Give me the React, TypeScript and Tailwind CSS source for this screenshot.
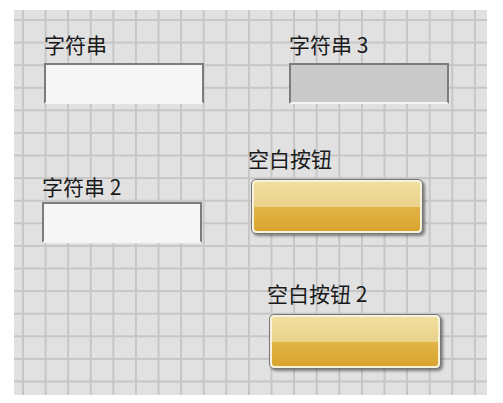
import React from 'react';

const font = { fontFamily: '"Microsoft YaHei", "Noto Sans CJK SC", "Noto Sans", sans-serif' };

// a LabVIEW-style control placed on the free front-panel canvas
function Control({ label, className, children }: { label: string; className: string; children: React.ReactNode }) {
  return (
    <div className={`absolute flex flex-col ${className}`}>
      <span className="text-[21px] leading-none text-[#1a1a1a] whitespace-nowrap" style={font}>
        {label}
      </span>
      {children}
    </div>
  );
}

function StringBox({ disabled }: { disabled?: boolean }) {
  return (
    <div
      className={`h-[41px] w-[160px] border-2 border-[#7c7c7c] border-b-[#f6f6f6] ${
        disabled ? 'bg-[#cacaca]' : 'bg-[#f6f6f6]'
      }`}
    />
  );
}

function BlankButton() {
  return (
    <div className="h-[55px] w-[172px] rounded-[5px] border border-[#777] p-[2px] bg-[#f7f2de] shadow-[2px_2px_3px_rgba(0,0,0,0.45)]">
      <div className="flex h-full w-full flex-col overflow-hidden rounded-[3px]">
        <div className="flex-1 bg-[linear-gradient(to_bottom,#f1df9e,#e9d18a)]" />
        <div className="flex-1 bg-[linear-gradient(to_bottom,#e1b446,#d9a52e)]" />
      </div>
    </div>
  );
}

export default function App() {
  return (
    <div className="h-[403px] w-[503px] bg-white pl-[14px] pt-[10px]">
      {/* front panel canvas */}
      <div className="relative h-[385px] w-[473px] bg-[#e1e1e1] bg-[linear-gradient(to_right,#c6c6c6_2px,transparent_2px),linear-gradient(to_bottom,#c6c6c6_2px,transparent_2px)] bg-[size:22.6px_22.6px] bg-[position:8px_9px]">
        <Control label="字符串" className="left-[30px] top-[24px] gap-[8px]">
          <StringBox />
        </Control>
        <Control label="字符串 3" className="left-[275px] top-[24px] gap-[8px]">
          <StringBox disabled />
        </Control>
        <Control label="空白按钮" className="left-[234px] top-[138px] gap-[10px]">
          <div className="pl-[3px]">
            <BlankButton />
          </div>
        </Control>
        <Control label="字符串 2" className="left-[28px] top-[166px] gap-[5px]">
          <StringBox />
        </Control>
        <Control label="空白按钮 2" className="left-[253px] top-[273px] gap-[10px]">
          <div className="pl-[2px]">
            <BlankButton />
          </div>
        </Control>
      </div>
    </div>
  );
}
